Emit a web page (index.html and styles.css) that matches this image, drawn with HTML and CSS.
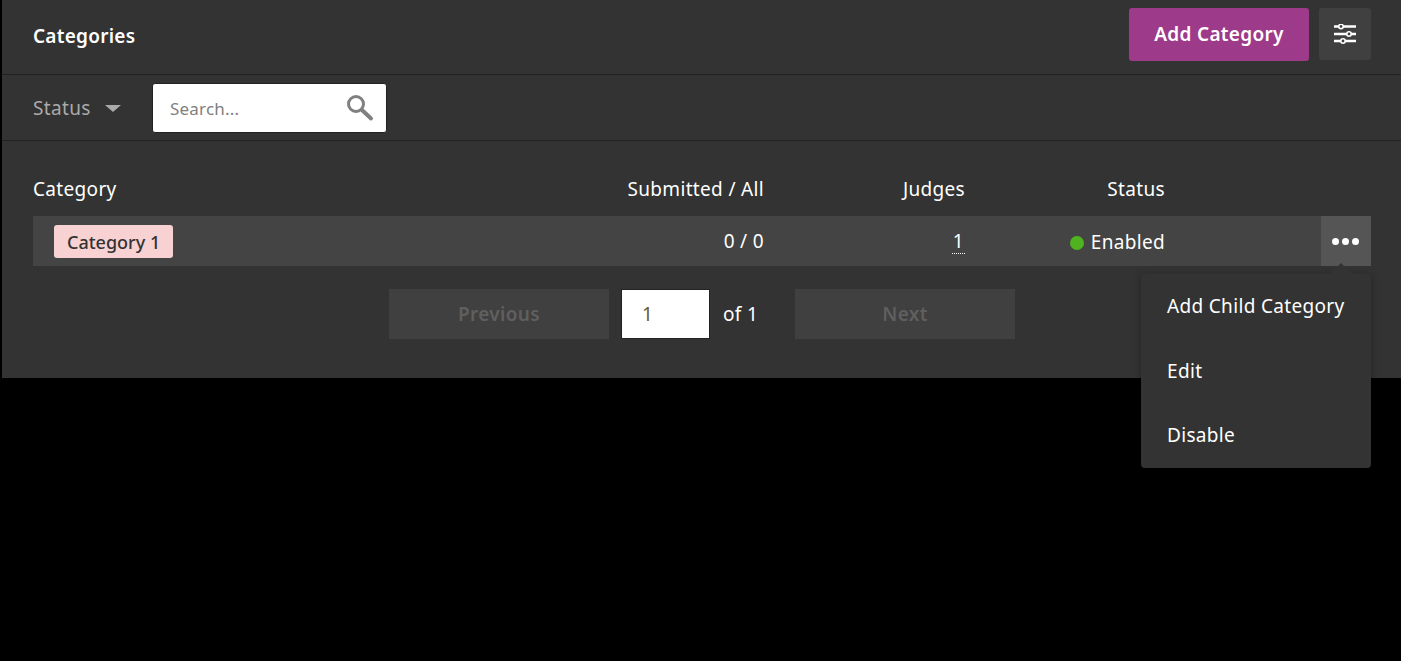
FILE: index.html
```html
<!DOCTYPE html>
<html lang="en">
<head>
    <meta charset="UTF-8">
    <title>Categories</title>
    <link rel="stylesheet" href="styles.css">
</head>
<body>

<div class="panel">
    <!-- Header -->
    <div class="panel-header">
        <h1 class="panel-title">Categories</h1>
        <div class="header-actions">
            <button class="btn-primary">Add Category</button>
            <button class="btn-settings" aria-label="Settings">
                <svg width="22" height="20" viewBox="0 0 22 20" fill="none" stroke="#fff" stroke-width="2.400">
                    <path d="M0 2.500H22M0 10H22M0 17H22"/>
                    <circle cx="7" cy="2.500" r="2.200" fill="#404040" stroke-width="1.600"/>
                    <circle cx="15" cy="10" r="2.200" fill="#404040" stroke-width="1.600"/>
                    <circle cx="9" cy="17" r="2.200" fill="#404040" stroke-width="1.600"/>
                </svg>
            </button>
        </div>
    </div>

    <!-- Filters -->
    <div class="toolbar">
        <div class="status-filter">
            <span>Status</span>
            <span class="caret"></span>
        </div>
        <div class="search-box">
            <span class="search-placeholder">Search...</span>
            <svg width="28" height="28" viewBox="0 0 28 28" fill="none" stroke="#808080">
                <circle cx="10" cy="10" r="7.500" stroke-width="3"/>
                <path d="M16 16L25 24.500" stroke-width="4" stroke-linecap="round"/>
            </svg>
        </div>
    </div>

    <!-- Table -->
    <div class="table-wrap">
        <div class="table-row table-head">
            <div>Category</div>
            <div class="align-right">Submitted / All</div>
            <div class="align-right">Judges</div>
            <div class="align-right">Status</div>
        </div>
        <div class="table-row table-item">
            <div class="cell-name"><span class="tag">Category 1</span></div>
            <div class="align-right">0 / 0</div>
            <div class="align-right"><span class="judge-count">1</span></div>
            <div class="align-right status-cell"><span class="dot"></span>Enabled</div>
            <div class="cell-actions">
                <button class="btn-more" aria-label="More"><i></i><i></i><i></i></button>
            </div>
        </div>

        <div class="pagination">
            <button class="btn-page">Previous</button>
            <div class="page-input">1</div>
            <span class="page-total">of 1</span>
            <button class="btn-page">Next</button>
        </div>
    </div>
</div>

<!-- Row menu -->
<div class="row-menu">
    <div class="menu-item">Add Child Category</div>
    <div class="menu-item">Edit</div>
    <div class="menu-item">Disable</div>
</div>

</body>
</html>
```

FILE: styles.css
```css
* {
    margin: 0;
    padding: 0;
    box-sizing: border-box;
}

body {
    font-family: 'Noto Sans', 'Open Sans', sans-serif;
    background-color: #000;
    color: #fff;
    font-size: 19px;
    letter-spacing: 0.33px;
    height: 661px;
    overflow: hidden;
    position: relative;
}

button {
    font-family: inherit;
    letter-spacing: inherit;
    border: none;
}

.panel {
    margin-left: 2px;
    height: 378px;
    background-color: #333;
}

/* Header */
.panel-header {
    height: 75px;
    padding: 8px 30px 0 31px;
    display: flex;
    justify-content: space-between;
    border-bottom: 1px solid #222;
}

.panel-title {
    font-size: 19px;
    font-weight: 600;
    letter-spacing: 0.25px;
    line-height: 56px;
}

.header-actions {
    display: flex;
    gap: 10px;
    align-items: flex-start;
}

.btn-primary {
    width: 180px;
    height: 53px;
    background-color: #9e3a8a;
    color: #fff;
    font-size: 19px;
    font-weight: 600;
    letter-spacing: 0.3px;
    padding-bottom: 2px;
    border-radius: 3px;
}

.btn-settings {
    width: 52px;
    height: 52px;
    background-color: #404040;
    border-radius: 3px;
    display: flex;
    align-items: center;
    justify-content: center;
}

/* Filters */
.toolbar {
    height: 66px;
    padding: 8px 0 0 31px;
    display: flex;
    align-items: flex-start;
    border-bottom: 1px solid #222;
}

.status-filter {
    width: 119px;
    height: 50px;
    display: flex;
    align-items: center;
    color: #aaa;
}

.caret {
    margin-left: 14px;
    border-left: 8px solid transparent;
    border-right: 8px solid transparent;
    border-top: 7px solid #aaa;
}

.search-box {
    width: 235px;
    height: 50px;
    background-color: #fff;
    border: 1px solid #222;
    border-radius: 3px;
    padding: 0 12px 0 17px;
    display: flex;
    align-items: center;
    justify-content: space-between;
}

.search-placeholder {
    color: #808080;
    font-size: 17px;
    letter-spacing: 0.2px;
}

/* Table */
.table-wrap {
    padding: 25px 30px 0 31px;
}

.table-row {
    display: grid;
    grid-template-columns: 530px 201px 201px 200px 156px 50px;
    align-items: center;
}

.table-head {
    height: 50px;
    padding-bottom: 4px;
}

.table-item {
    height: 50px;
    background-color: #444;
}

.align-right {
    text-align: right;
}

.cell-name {
    padding-left: 21px;
}

.tag {
    display: inline-block;
    height: 33px;
    line-height: 35px;
    padding: 0 13px;
    background-color: #f8d2d2;
    color: #333;
    border-radius: 3px;
    font-size: 18px;
    letter-spacing: 0;
    font-weight: 500;
}

.judge-count {
    display: inline-block;
    line-height: 24px;
    padding: 0 1px 0 1px;
    border-bottom: 1px dotted #fff;
}

.status-cell {
    padding-top: 1px;
}

.dot {
    display: inline-block;
    width: 14px;
    height: 14px;
    border-radius: 50%;
    background-color: #4fb31f;
    margin-right: 7px;
    vertical-align: -1px;
}

.cell-actions {
    grid-column: 6;
}

.btn-more {
    width: 50px;
    height: 50px;
    background-color: #555;
    display: flex;
    align-items: center;
    justify-content: center;
    gap: 3px;
    padding-right: 1px;
}

.btn-more i {
    width: 7px;
    height: 7px;
    border-radius: 50%;
    background-color: #fff;
}

.pagination {
    margin-top: 23px;
    padding-left: 356px;
    display: flex;
    align-items: center;
}

.btn-page {
    width: 220px;
    height: 50px;
    background-color: #404040;
    color: #5f5f5f;
    font-size: 19px;
    font-weight: 600;
}

.page-input {
    width: 89px;
    height: 50px;
    margin-left: 12px;
    padding-left: 20px;
    line-height: 48px;
    background-color: #fff;
    border: 1px solid #222;
    color: #6b5a2a;
}

.page-total {
    width: 85px;
    padding-left: 13px;
}

/* Row menu */
.row-menu {
    position: absolute;
    left: 1141px;
    top: 274px;
    width: 230px;
    height: 194px;
    padding: 0 26px;
    background-color: #333;
    border-radius: 4px;
    box-shadow: 0 2px 8px rgba(0, 0, 0, 0.35);
}

.row-menu::before {
    content: '';
    position: absolute;
    left: 189px;
    top: -11px;
    border-left: 11px solid transparent;
    border-right: 11px solid transparent;
    border-bottom: 11px solid #333;
}

.menu-item {
    height: 64.5px;
    line-height: 64.5px;
    white-space: nowrap;
}
```
